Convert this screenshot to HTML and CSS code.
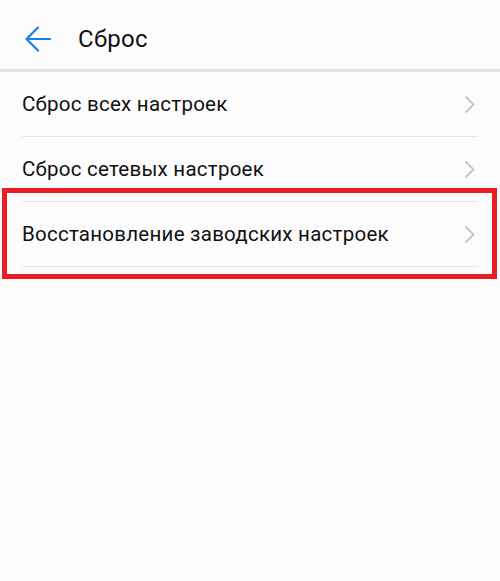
FILE: index.html
```html
<!DOCTYPE html>
<html lang="ru">
<head>
<meta charset="utf-8">
<link rel="stylesheet" href="styles.css">
</head>
<body>
<div class="screen">
  <header class="topbar">
    <svg class="back" width="26" height="26" viewBox="0 0 26 26">
      <path d="M25 13 H2 M13 1.5 L1.5 13 L13 24.5" fill="none" stroke="#1a7fe8" stroke-width="2.2" stroke-linecap="round" stroke-linejoin="round"/>
    </svg>
    <h1 class="title">Сброс</h1>
  </header>
  <ul class="list">
    <li class="item"><span class="label">Сброс всех настроек</span><svg class="chev" width="11" height="19" viewBox="0 0 11 19"><path d="M1.5 1.5 L9.5 9.5 L1.5 17.5" fill="none" stroke="#c4c4c4" stroke-width="1.8"/></svg></li>
    <li class="item"><span class="label">Сброс сетевых настроек</span><svg class="chev" width="11" height="19" viewBox="0 0 11 19"><path d="M1.5 1.5 L9.5 9.5 L1.5 17.5" fill="none" stroke="#c4c4c4" stroke-width="1.8"/></svg></li>
    <li class="item"><span class="label">Восстановление заводских настроек</span><svg class="chev" width="11" height="19" viewBox="0 0 11 19"><path d="M1.5 1.5 L9.5 9.5 L1.5 17.5" fill="none" stroke="#c4c4c4" stroke-width="1.8"/></svg></li>
  </ul>
  <div class="highlight"></div>
</div>
</body>
</html>
```
FILE: styles.css
```css
html, body {
  margin: 0;
  padding: 0;
  background: #fcfcfc;
}
.screen {
  position: relative;
  width: 500px;
  height: 581px;
  background: #fcfcfc;
  font-family: Roboto, "Noto Sans", sans-serif;
  color: #111;
}
.topbar {
  height: 69px;
  display: flex;
  align-items: center;
  padding-left: 25px;
  border-bottom: 3px solid #e2e2e2;
  box-sizing: content-box;
}
.back {
  display: block;
  margin-top: 8px;
}
.title {
  margin: 8px 0 0 27px;
  font-size: 24px;
  line-height: 28px;
  letter-spacing: 0.3px;
  font-weight: 400;
  color: #111;
}
.list {
  list-style: none;
  margin: 0;
  padding: 0 22px;
}
.item {
  height: 64px;
  display: flex;
  align-items: center;
  justify-content: space-between;
  border-bottom: 1px solid #e6e6e6;
}
.label {
  font-size: 20.5px;
  line-height: 24px;
  letter-spacing: 0.25px;
  color: #111;
}
.chev {
  display: block;
  margin-right: 3px;
}
.highlight {
  position: absolute;
  left: 2px;
  top: 188px;
  width: 485px;
  height: 81px;
  border: 5px solid #ec1c24;
}
```
